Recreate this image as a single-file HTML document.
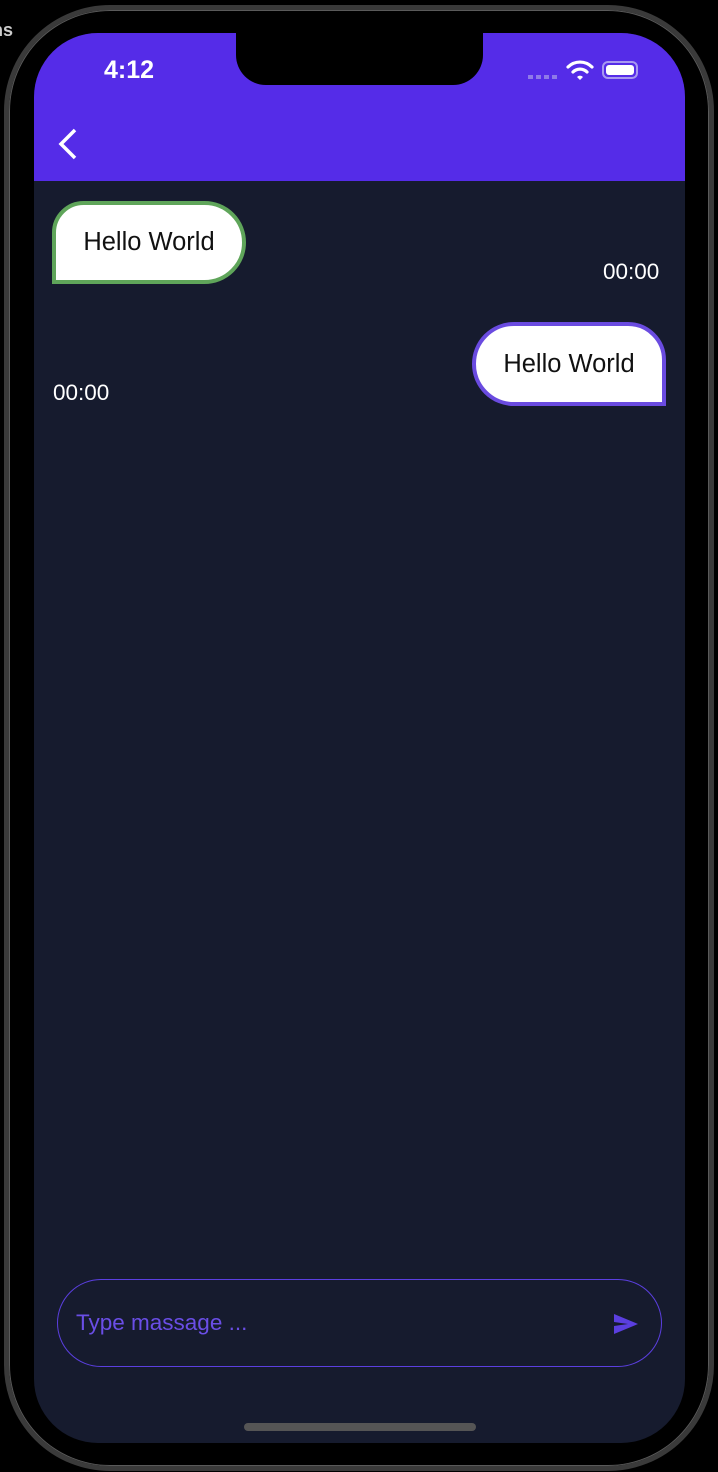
<!DOCTYPE html>
<html><head><meta charset="utf-8"><style>
html,body{margin:0;padding:0;background:#000;width:718px;height:1472px;overflow:hidden;font-family:"Liberation Sans",sans-serif;}
.frame{position:absolute;left:4px;top:5px;width:710px;height:1466px;border:5px solid #3a3a3a;border-radius:106px;box-sizing:border-box;background:#000;box-shadow:inset 0 0 0 1px #5a5a5a;}
.screen{position:absolute;left:34px;top:33px;width:651px;height:1410px;border-radius:64px;background:#161b2e;overflow:hidden;}
.header{position:absolute;left:0;top:0;width:651px;height:148px;background:#552ce8;}
.notch{position:absolute;left:202px;top:-2px;width:247px;height:54px;background:#000;border-radius:0 0 30px 30px;}
.time{position:absolute;left:70px;top:23px;color:#fff;font-size:25px;font-weight:bold;}
.bubble{position:absolute;background:#fff;box-sizing:border-box;color:#111;font-size:25.5px;display:flex;align-items:center;justify-content:center;}
.b1{left:52px;top:201px;width:194px;height:83px;border:4px solid #5fa55a;border-radius:32px 42px 42px 0;}
.b2{left:472px;top:322px;width:194px;height:84px;border:4px solid #6a4be0;border-radius:42px 38px 0 42px;}
.ts{position:absolute;color:#fff;font-size:22.5px;}
.input{position:absolute;left:57px;top:1279px;width:605px;height:88px;border:1.5px solid #5b3fe0;border-radius:44px;box-sizing:border-box;}
.ph{position:absolute;left:76px;top:1310px;color:#6a4ee6;font-size:22.5px;}
.home{position:absolute;left:244px;top:1423px;width:232px;height:8px;border-radius:4px;background:#555;}
</style></head><body>
<div class="frame"></div>
<div style="position:absolute;left:-8px;top:20px;color:#ccc;font-size:18px;font-weight:bold;">ns</div>
<div class="screen">
 <div class="header">
  <div class="notch"></div>
  <div class="time">4:12</div>
  <div style="position:absolute;left:494px;top:42px;width:30px;height:4px;background:repeating-linear-gradient(90deg,#8f7ae8 0 5px,transparent 5px 8px);"></div>
  <svg style="position:absolute;left:532px;top:26px" width="28" height="22" viewBox="0 0 28 22"><path d="M2 8 A17 17 0 0 1 26 8" stroke="#fff" stroke-width="3.2" fill="none" stroke-linecap="round"/><path d="M7 13 A10 10 0 0 1 21 13" stroke="#fff" stroke-width="3.2" fill="none" stroke-linecap="round"/><path d="M11 18 L14 21 L17 18 A4 4 0 0 0 11 18Z" fill="#fff"/></svg>
  <div style="position:absolute;left:568px;top:28px;width:36px;height:18px;border:2px solid #a898f0;border-radius:6px;box-sizing:border-box;padding:2px;"><div style="width:100%;height:100%;background:#fff;border-radius:3px"></div></div>
  <svg style="position:absolute;left:22px;top:94px" width="22" height="34" viewBox="0 0 22 34"><path d="M19 3 L5 17 L19 31" stroke="#fff" stroke-width="3.5" fill="none"/></svg>
 </div>
</div>
<div class="bubble b1">Hello World</div>
<div class="ts" style="left:603px;top:259px">00:00</div>
<div class="bubble b2">Hello World</div>
<div class="ts" style="left:53px;top:380px">00:00</div>
<div class="input"></div>
<div class="ph">Type massage ...</div>
<svg style="position:absolute;left:613px;top:1313px" width="26" height="22" viewBox="0 0 26 22"><path d="M1 1 L25 11 L1 21 L1 13 L15 11 L1 9Z" fill="#5b3fe0"/></svg>
<div class="home"></div>
</body></html>
